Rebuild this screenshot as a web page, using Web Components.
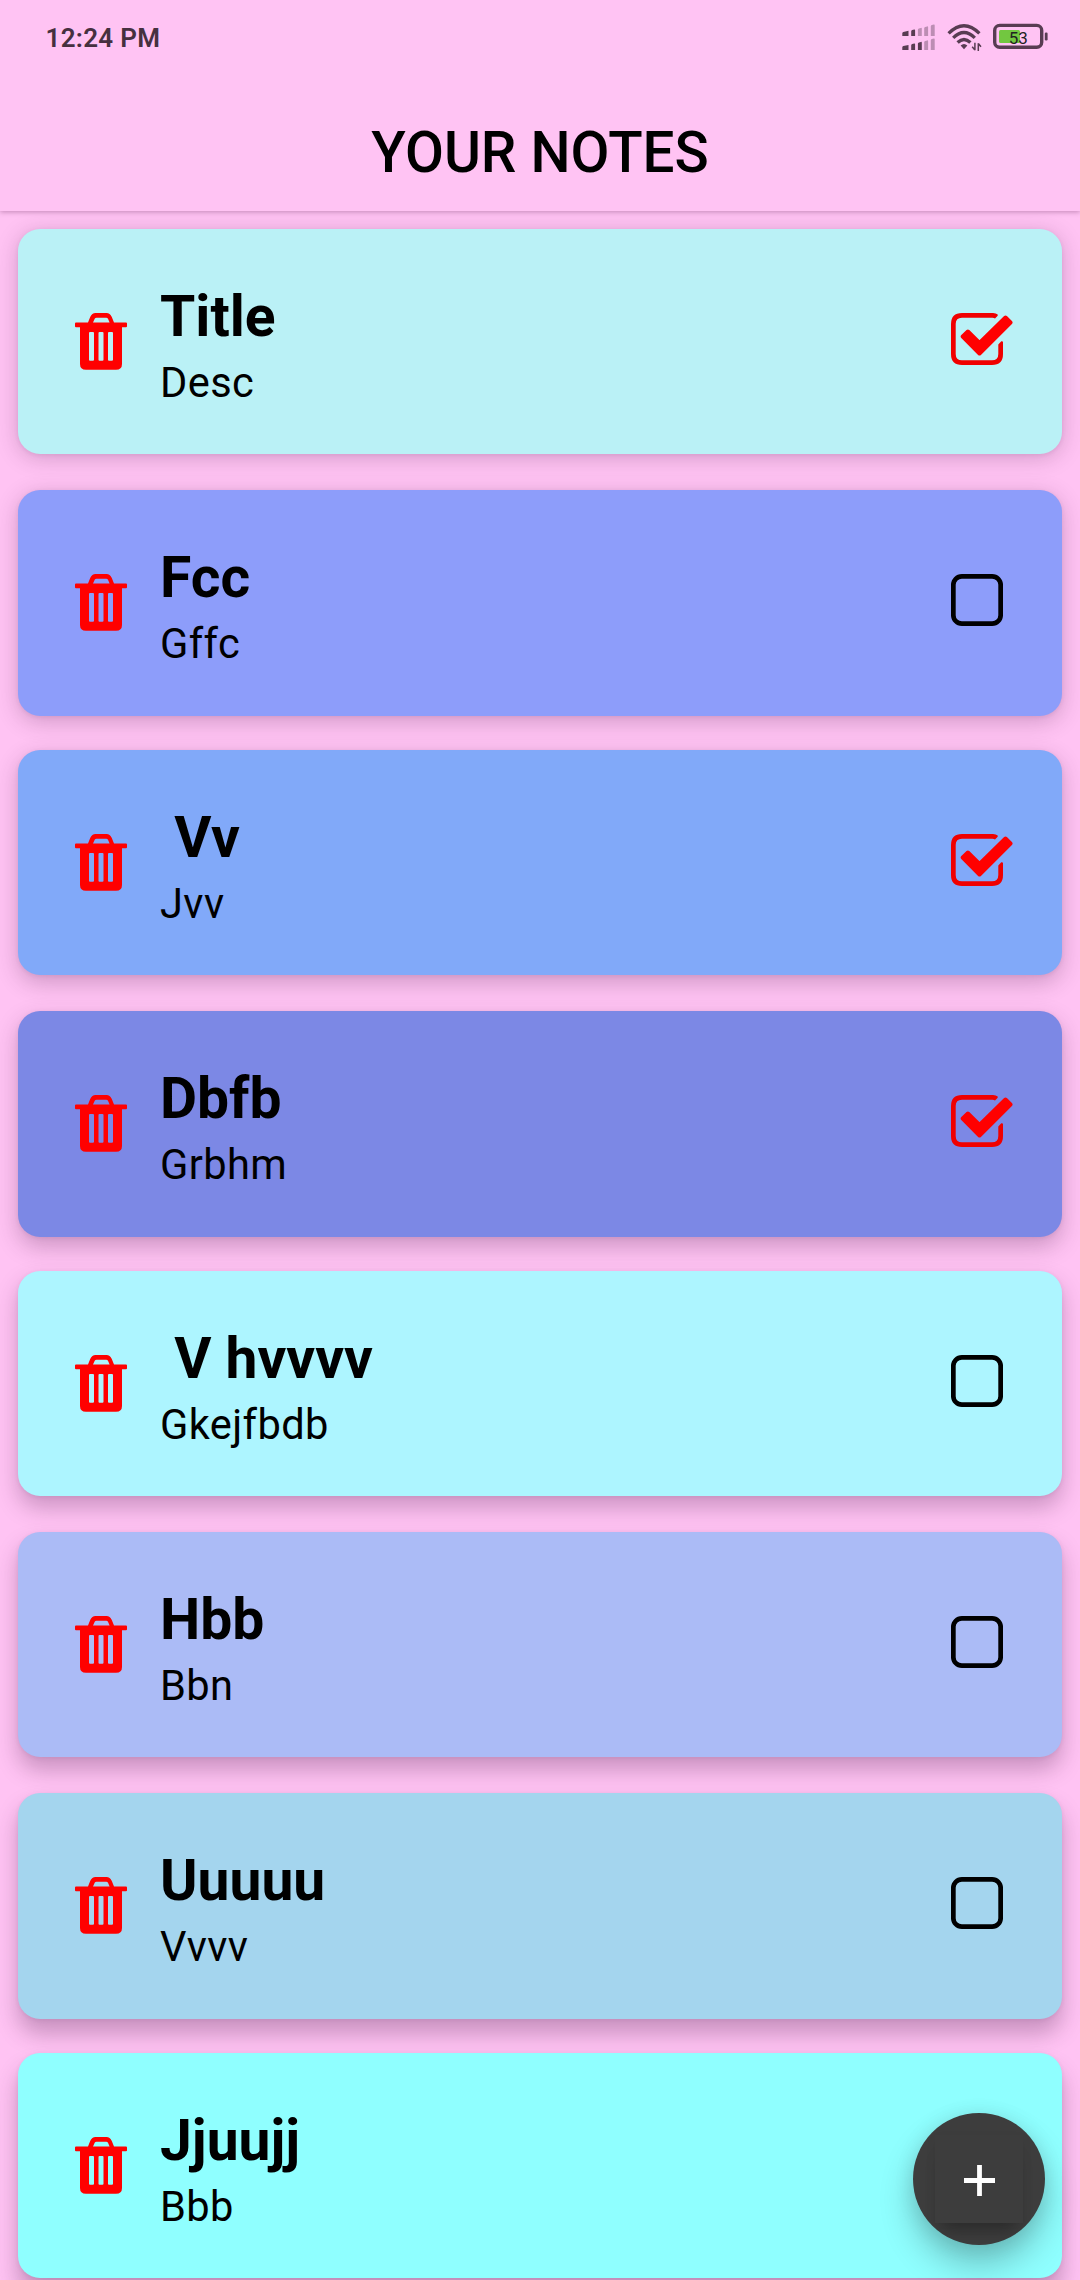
<!DOCTYPE html>
<html lang="en">
<head>
<meta charset="utf-8">
<title>Your Notes</title>
<style>
html,body{margin:0;padding:0}
body{width:1080px;height:2280px;overflow:hidden;background:#ffc3f3;font-family:Roboto,"Liberation Sans",sans-serif;color:#000}
</style>
</head>
<body>
<notes-app></notes-app>
<script>
const define = (name, html, setup) => {
  const t = document.createElement('template');
  t.innerHTML = html;
  customElements.define(name, class extends HTMLElement {
    constructor() {
      super();
      this.attachShadow({ mode: 'open' }).append(t.content.cloneNode(true));
    }
    connectedCallback() { if (setup) setup(this, this.shadowRoot); }
  });
};

define('status-bar', `
<style>
:host{display:flex;height:75px;box-sizing:border-box;padding:0 32px 0 45.5px;justify-content:space-between;color:#46303f}
.time{font-size:26px;line-height:30px;font-weight:600;letter-spacing:.3px;margin-top:22.500px;white-space:nowrap}
.icons{display:block;width:148px;height:30px;margin-top:22px}
</style>
<div class="time"><slot></slot></div>
<svg class="icons" viewBox="900 22 148 30">
  <g fill="#583c52">
    <path d="M902.3 33.2q0-1 1-1.2l5.200-1.200v5.200h-6.200zM911.2 31.2q0-.8 1-1.100l2-.5q.9-.2.9.8V36h-3.900zM902.3 47.300q0-1 1-1.200l5.200-1.200v5.200h-6.200zM911.2 45.200q0-.8 1-1.100l2-.5q.9-.2.9.8V50h-3.900zM917.9 43.500q0-.8 1-1.100l2-.5q.9-.2.9.8V50h-3.900z"/>
    <path opacity=".4" d="M917.9 29.500q0-.8 1-1.100l2-.5q.9-.2.9.8V36h-3.900zM924.2 28q0-.8 1-1.100l2-.5q.9-.2.9.8V36h-3.900zM930.8 26.200q0-.8 1-1.100l2-.5q.9-.2.9.8V36h-3.900zM924.2 42q0-.8 1-1.100l2-.5q.9-.2.9.8V50h-3.900zM930.8 40.200q0-.8 1-1.100l2-.5q.9-.2.9.8V50h-3.900z"/>
  </g>
  <g fill="none" stroke="#583c52" stroke-width="3.300">
    <path d="M948.6 33.400q15.400-15.200 30.800 0"/>
    <path d="M953.2 37.900q10.800-10.600 21.600 0"/>
    <path d="M957.6 42.500q6.400-6.200 12.800 0"/>
  </g>
  <path fill="#583c52" d="M960.6 45.600q3.400-3 6.800 0l-3.400 3.600z"/>
  <path fill="none" stroke="#583c52" stroke-width="1.500" d="M974.9 42.700v7.600m0-.4-2.700-3.200M978.3 51v-7.800m0 .3 2.700 3.300"/>
  <rect x="994.7" y="25.400" width="47" height="21.800" rx="5" fill="none" stroke="#583c52" stroke-width="3.400"/>
  <rect x="999" y="30" width="21" height="13" rx="1.500" fill="#72c740"/>
  <rect x="1044.800" y="32.500" width="2.800" height="8" rx="1.200" fill="#583c52"/>
  <text x="1018.300" y="44" font-size="17" text-anchor="middle" fill="#222">53</text>
</svg>`);

define('app-header', `
<style>
:host{display:flex;height:136px;align-items:flex-start;justify-content:center;position:relative;z-index:1;clip-path:inset(0 0 -12px 0);box-shadow:0 1px 5px rgba(80,20,70,.34)}
h1{margin:44px 0 0;font-size:56.500px;line-height:68px;font-weight:500;white-space:nowrap}
</style>
<h1><slot></slot></h1>`);

define('trash-icon', `
<style>:host{display:block;width:52px;height:57px}svg{display:block}</style>
<svg width="52" height="57" viewBox="0 0 52 57" fill="#f00">
  <path fill-rule="evenodd" d="M13 9.600 15.200 4Q17 0 20.500 0h11q3.500 0 5.300 4L39 9.600h12a1 1 0 0 1 1 1v2.600a1 1 0 0 1-1 1h-4V51q0 5.800-6 5.800H11q-6 0-6-5.800V14.200H1a1 1 0 0 1-1-1v-2.600a1 1 0 0 1 1-1zM18 9.600h16.600L33 5.800Q32.400 4.700 31.200 4.700H21.500Q20.200 4.700 19.700 5.800zM15 19a1 1 0 0 0-1 1v26.700a1 1 0 0 0 1 1h3a1 1 0 0 0 1-1V20a1 1 0 0 0-1-1zM24.500 19a1 1 0 0 0-1 1v26.700a1 1 0 0 0 1 1h3a1 1 0 0 0 1-1V20a1 1 0 0 0-1-1zM34 19a1 1 0 0 0-1 1v26.700a1 1 0 0 0 1 1h3a1 1 0 0 0 1-1V20a1 1 0 0 0-1-1z"/>
</svg>`);

define('check-box', `
<style>
:host{display:block;width:62px;height:52px}
svg{display:block}
.on{display:none}
:host([checked]) .on{display:inline}
:host([checked]) .off{display:none}
</style>
<svg width="62" height="52" viewBox="0 0 62 52">
  <rect class="off" x="2.350" y="2.350" width="47.300" height="47.300" rx="8.500" fill="none" stroke="#000" stroke-width="4.700"/>
  <g class="on">
    <path fill="#f00000" d="M42 0Q45 .2 46.700 1.600V2.800L44 5.400Q43 4.700 41.500 4.700H11Q4.700 4.700 4.700 11V41Q4.700 47.300 11 47.300H41Q47.300 47.300 47.300 41V31.500L50.300 28.300Q51.200 27.900 52 28.800V41Q52 52 41 52H11Q0 52 0 41V11Q0 0 11 0z"/>
    <path fill="#f00" stroke="#f00" stroke-width="4" stroke-linejoin="round" d="M11.700 23.500 16.900 18.500 28.500 30 54.500 4.500 59.500 9.500 28.500 40.500z"/>
  </g>
</svg>`);

define('note-card', `
<style>
:host{display:flex;height:var(--h);box-sizing:border-box;padding:0 49px 0 57px;border-radius:22px;background:var(--bg);
box-shadow:0 var(--dy) 22px rgba(60,20,60,var(--a)),0 1px 4px rgba(60,20,60,.08)}
trash-icon{margin-top:84px}
.text{flex:1;margin:54px 0 0 33px;white-space:pre}
.title{font-size:57px;line-height:68px;font-weight:700}
.desc{font-size:41.600px;line-height:48px;margin-top:8px;font-weight:400;letter-spacing:.4px}
check-box{margin-top:84px}
</style>
<trash-icon></trash-icon>
<div class="text"><div class="title"><slot name="title"></slot></div><div class="desc"><slot name="desc"></slot></div></div>
<check-box></check-box>`, (el, root) => {
  if (el.hasAttribute('done')) root.querySelector('check-box').setAttribute('checked', '');
});

define('add-button', `
<style>
:host{display:flex;width:132px;height:132px;border-radius:50%;background:#3d3d3d;color:#fff;align-items:center;justify-content:center;
box-shadow:0 20px 34px rgba(0,0,0,.24),0 2px 20px rgba(0,0,0,.1)}
.clip{display:flex;width:132px;height:132px;border-radius:50%;overflow:hidden;align-items:center;justify-content:center}
.face{width:88px;height:88px;display:flex;align-items:center;justify-content:center;background:#3d3d3d;box-shadow:0 16px 16px -8px rgba(0,0,0,.25),0 4px 10px rgba(0,0,0,.06)}
svg{display:block;margin:3px 0 0 1px}
</style>
<div class="clip"><div class="face"><svg width="31" height="31" viewBox="0 0 31 31"><path d="M0 15.500h31M15.500 0v31" stroke="#fff" stroke-width="4.800"/></svg></div></div>`);

define('notes-app', `
<style>
:host{display:block;width:1080px;height:2280px;position:relative;overflow:hidden}
main{display:grid;grid-template-rows:261px 260px 261px 260px 261px 261px 260px 227px;align-items:start;padding:18px 18px 0}
add-button{position:absolute;left:913px;top:2113px}
</style>
<status-bar>12:24 PM</status-bar>
<app-header>YOUR NOTES</app-header>
<main></main>
<add-button></add-button>`, (el, root) => {
  const notes = [
    ['Title', 'Desc', '#baf1f6', true, 225],
    ['Fcc', 'Gffc', '#8d9dfa', false, 226],
    [' Vv', 'Jvv', '#81a9f9', true, 225],
    ['Dbfb', 'Grbhm', '#7c88e5', true, 226],
    [' V hvvvv', 'Gkejfbdb', '#adf5ff', false, 225],
    ['Hbb', 'Bbn', '#abbbf6', false, 225],
    ['Uuuuu', 'Vvvv', '#a4d5ee', false, 226],
    ['Jjuujj', 'Bbb', '#8fffff', false, 225]
  ];
  const list = root.querySelector('main');
  notes.forEach(([title, desc, color, done, height], i) => {
    const card = document.createElement('note-card');
    card.style.setProperty('--bg', color);
    card.style.setProperty('--h', height + 'px');
    card.style.setProperty('--dy', (4 + i * 1.8) + 'px');
    card.style.setProperty('--a', 0.22 + i * 0.01);
    if (done) card.setAttribute('done', '');
    for (const [slot, value] of [['title', title], ['desc', desc]]) {
      const s = document.createElement('span');
      s.slot = slot;
      s.textContent = value;
      card.append(s);
    }
    list.append(card);
  });
});
</script>
</body>
</html>
